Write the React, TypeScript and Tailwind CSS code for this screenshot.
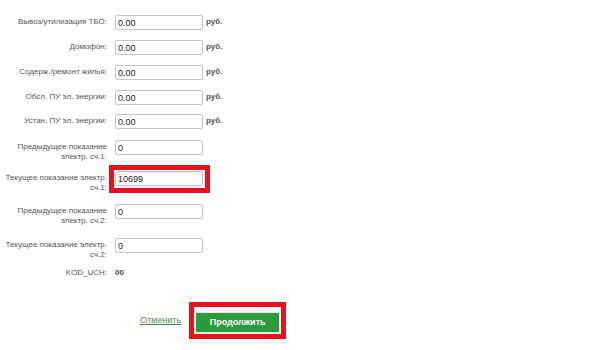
import React from 'react';

type Row = {
  label: string;
  value: string;
  unit?: boolean;
  highlight?: boolean;
  mt: string;
};

const rows: Row[] = [
  { label: 'Вывоз/утилизация ТБО:', value: '0.00', unit: true, mt: 'mt-[15px]' },
  { label: 'Домофон:', value: '0.00', unit: true, mt: 'mt-[10px]' },
  { label: 'Содерж./ремонт жилья:', value: '0.00', unit: true, mt: 'mt-[10px]' },
  { label: 'Обсл. ПУ эл. энергии:', value: '0.00', unit: true, mt: 'mt-[10px]' },
  { label: 'Устан. ПУ эл. энергии:', value: '0.00', unit: true, mt: 'mt-[9px]' },
  { label: 'Предыдущее показание электр. сч.1:', value: '0', mt: 'mt-[11px]' },
  { label: 'Текущее показание электр. сч.1:', value: '10699', highlight: true, mt: 'mt-[9px]' },
  { label: 'Предыдущее показание электр. сч.2:', value: '0', mt: 'mt-[11px]' },
  { label: 'Текущее показание электр. сч.2:', value: '0', mt: 'mt-[12px]' },
];

function Field({ row }: { row: Row }) {
  return (
    <div className={`flex items-start ${row.mt}`}>
      <div className="w-[107px] pl-[4px] pt-[2px] text-right text-[8px] leading-[10px] text-[#555]">
        {row.label}
      </div>
      <div className="relative ml-[8px]">
        {row.highlight && (
          <div className="pointer-events-none absolute -left-[6px] -right-[7px] -top-[6px] -bottom-[7px] border-[5px] border-[#e3141b]" />
        )}
        <input
          readOnly
          value={row.value}
          className="block h-[15px] w-[88px] rounded-[2px] border border-[#c4c4c4] bg-white px-[2px] text-[9px] leading-[13px] text-[#222] outline-none"
        />
      </div>
      {row.unit && (
        <span className="ml-[3px] pt-[2px] text-[8px] font-bold leading-[10px] text-[#555]">
          руб.
        </span>
      )}
    </div>
  );
}

export default function App() {
  return (
    <div className="h-[350px] w-[600px] overflow-hidden bg-white font-['Liberation_Sans',Arial,sans-serif]">
      <div className="flex flex-col">
        {rows.map((r) => (
          <Field key={r.label} row={r} />
        ))}
        <div className="mt-[8px] flex items-center">
          <div className="w-[107px] text-right text-[8px] leading-[10px] text-[#555]">KOD_UCH:</div>
          <div className="ml-[8px] text-[8px] font-bold leading-[10px] text-[#444]">00</div>
        </div>
        <div className="mt-[24px] flex items-center pl-[140px]">
          <a href="#" className="text-[9px] text-[#3f8f3f] underline">
            Отменить
          </a>
          <div className="ml-[8px] border-[5px] border-[#e3141b] p-[1px]">
            <button
              type="button"
              className="h-[21px] w-[85px] rounded-[2px] border border-[#e6ecd2] bg-[#2c9a3b] text-[9px] font-bold text-white"
            >
              Продолжить
            </button>
          </div>
        </div>
      </div>
    </div>
  );
}
